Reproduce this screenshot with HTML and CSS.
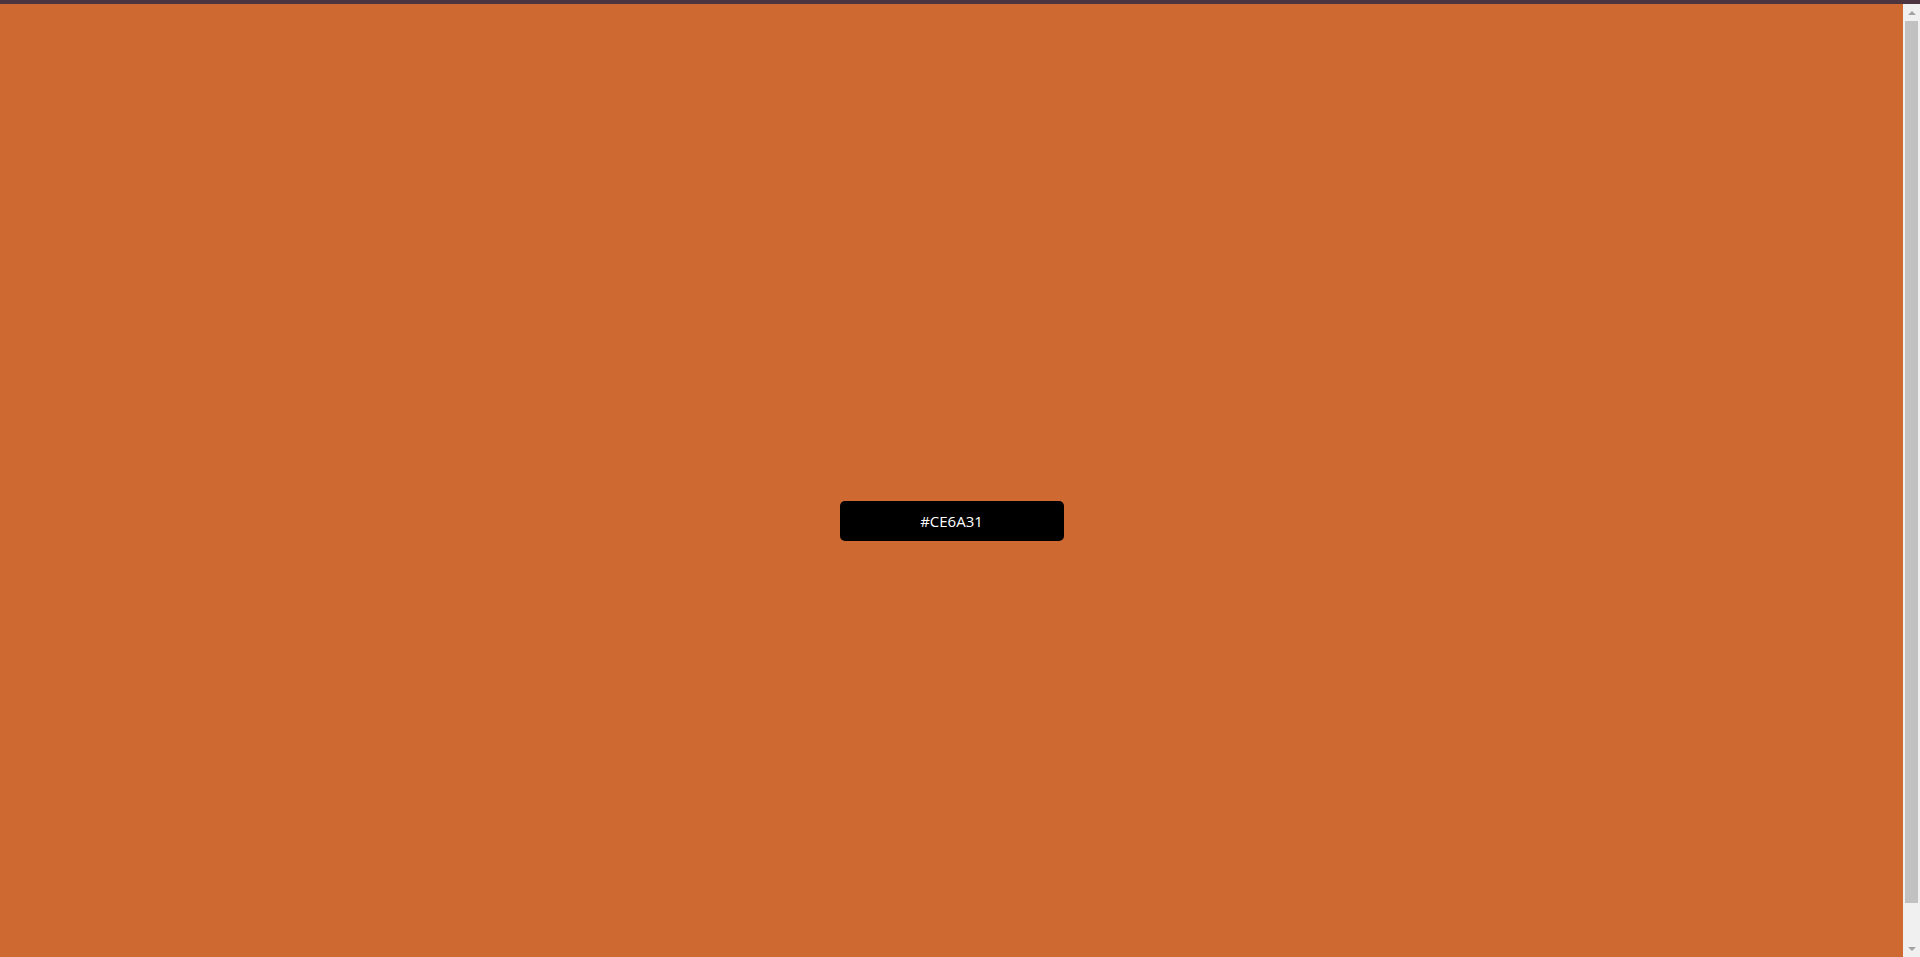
FILE: index.html
```html
<!DOCTYPE html>
<html lang="en">
<head>
<meta charset="utf-8">
<title>Color</title>
<link rel="stylesheet" href="styles.css">
</head>
<body>
<div class="topbar"></div>
<main class="stage">
  <button class="hex-btn" type="button">#CE6A31</button>
</main>
<aside class="scrollbar" aria-hidden="true">
  <div class="sb-btn"><span class="arrow up"></span></div>
  <div class="sb-track"><div class="sb-thumb"></div></div>
  <div class="sb-btn"><span class="arrow down"></span></div>
</aside>
</body>
</html>
```

FILE: styles.css
```css
html, body {
  margin: 0;
  padding: 0;
}
html {
  overflow: hidden;
}
body {
  background: #ce6a31;
  font-family: "Open Sans", "Noto Sans", sans-serif;
}
.topbar {
  height: 4px;
  background: #4d3540;
}
.stage {
  height: 996px;
  box-sizing: border-box;
  padding-top: 38px;
  padding-right: 17px;
  display: flex;
  align-items: center;
  justify-content: center;
}
.hex-btn {
  width: 224px;
  height: 40px;
  border: none;
  border-radius: 5px;
  background: #000;
  color: #fff;
  font-family: "Open Sans", "Noto Sans", sans-serif;
  font-size: 15px;
  padding: 0;
  cursor: pointer;
}
.scrollbar {
  position: fixed;
  top: 4px;
  right: 0;
  width: 17px;
  height: calc(100vh - 4px);
  background: #f0f0f0;
  display: flex;
  flex-direction: column;
}
.sb-btn {
  height: 17px;
  flex: none;
  display: flex;
  align-items: center;
  justify-content: center;
}
.arrow {
  width: 0;
  height: 0;
  border-left: 4px solid transparent;
  border-right: 4px solid transparent;
}
.arrow.up {
  border-bottom: 4px solid #a3a3a3;
}
.arrow.down {
  border-top: 4px solid #a3a3a3;
}
.sb-track {
  flex: 1;
  padding: 0 2px 37px;
  display: flex;
}
.sb-thumb {
  flex: 1;
  background: #c1c1c1;
}
```
